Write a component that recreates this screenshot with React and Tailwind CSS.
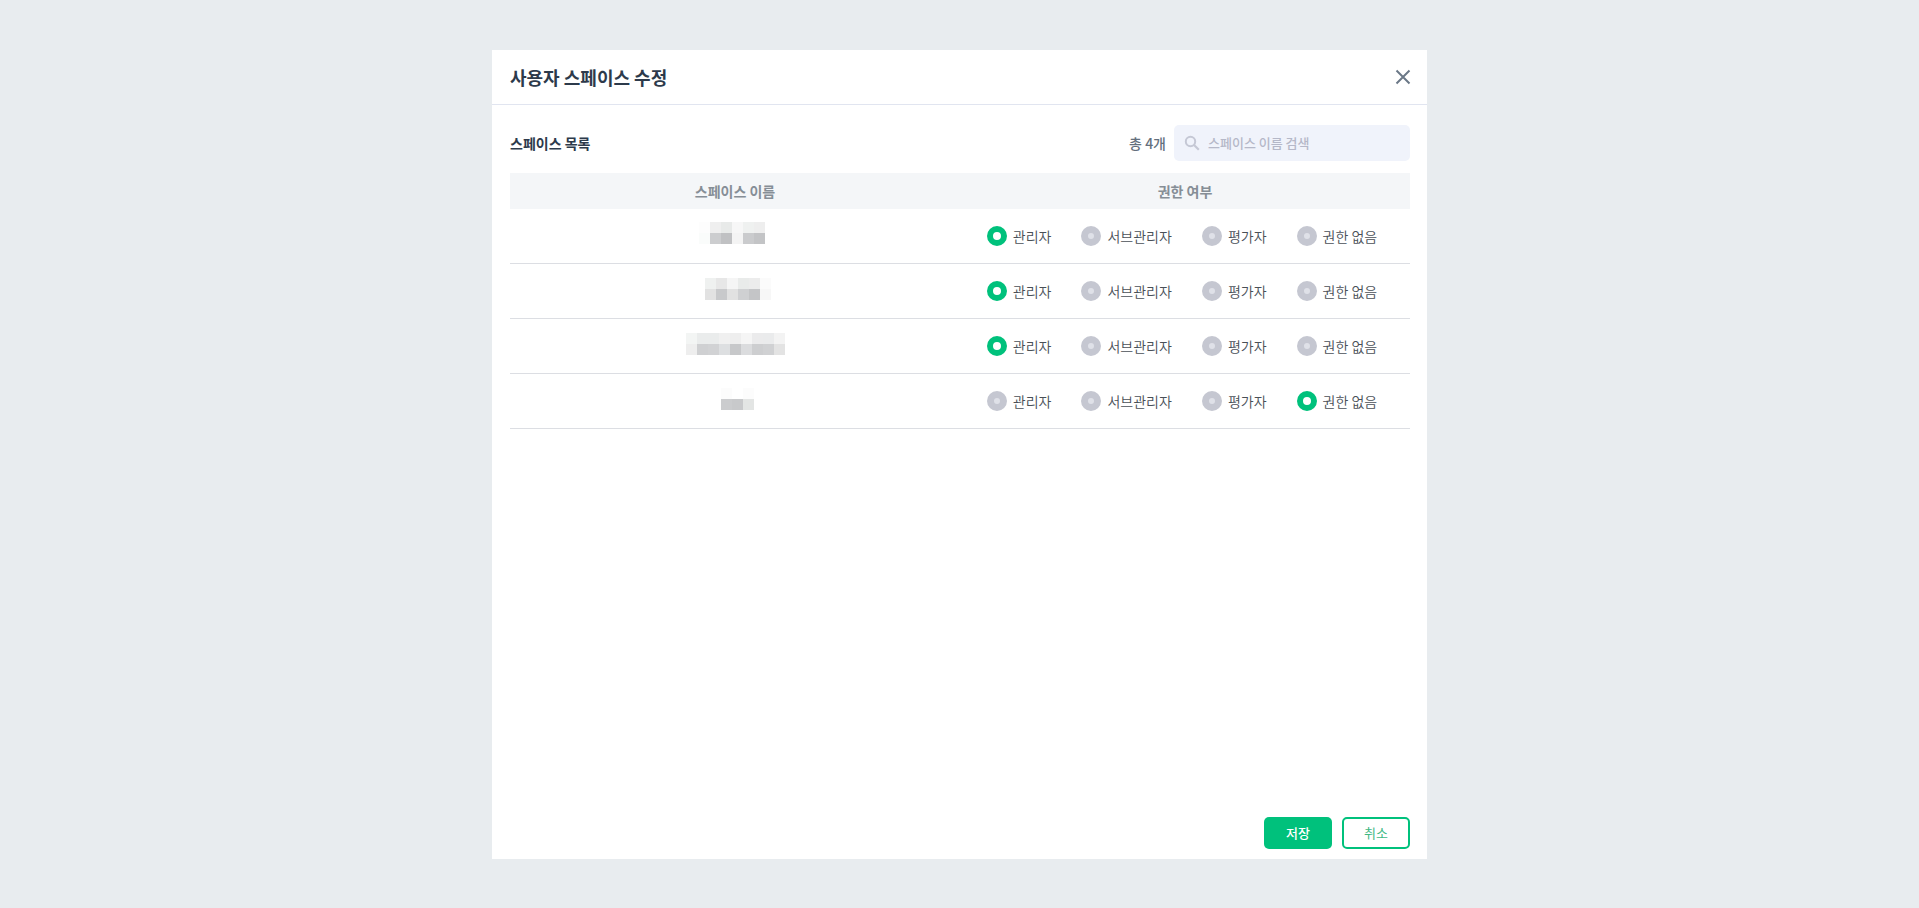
import React, { useState } from "react";

const roles = ["관리자", "서브관리자", "평가자", "권한 없음"];

// names are masked, x / y is where the mosaic starts inside its box
const spaces = [
  {
    id: 1,
    role: "관리자",
    x: 19,
    y: 1,
    mask: [
      ["#fdfdfd", "#efefef", "#e8eae9", "#f7f7f7", "#eff1f0", "#eeeeee"],
      ["#fafcfb", "#cccdcf", "#c0c1c3", "#f4f4f4", "#cacbcd", "#c3c4c6"],
    ],
  },
  {
    id: 2,
    role: "관리자",
    x: 25,
    y: 2,
    mask: [
      ["#eff1f0", "#e7e7e7", "#f5f5f5", "#e9ebea", "#ececec", "#fbfbfb"],
      ["#e2e2e2", "#c8c9cb", "#e1e1e1", "#cfd0d2", "#c4c5c7", "#f7f7f7"],
    ],
  },
  {
    id: 3,
    role: "관리자",
    x: 6,
    y: 2,
    mask: [
      ["#f3f5f4", "#eaecec", "#eaecec", "#f0f0f0", "#eeeeee", "#f5f5f5", "#ebebec", "#eaebec", "#f3f3f3"],
      ["#eeeeee", "#cfd0d2", "#d1d2d4", "#dddfe1", "#c7c8ca", "#dbdcde", "#cdced0", "#d0d1d3", "#e3e3e3"],
    ],
  },
  {
    id: 4,
    role: "권한 없음",
    x: 41,
    y: 2,
    mask: [
      ["#fcfcfc", "#ffffff", "#fcfcfc"],
      ["#cbccce", "#c8c9cb", "#e3e5e4"],
    ],
  },
];

function MaskedName({ space }) {
  return (
    <svg
      className="block mx-auto"
      width="110"
      height="30"
      viewBox="0 0 110 30"
      shapeRendering="crispEdges"
      aria-hidden="true"
    >
      {space.mask.map((row, r) =>
        row.map((color, c) => (
          <rect
            key={`${r}-${c}`}
            x={space.x + c * 11}
            y={space.y + r * 11}
            width="11"
            height="11"
            fill={color}
          />
        ))
      )}
    </svg>
  );
}

function RoleRadio({ name, label, checked, onChange }) {
  return (
    <label className="flex items-center gap-1.5 cursor-pointer">
      <input
        type="radio"
        name={name}
        checked={checked}
        onChange={onChange}
        className="appearance-none shrink-0 w-5 h-5 rounded-full border-[7px] border-[#c5c7d1] bg-[#dfe1e8] checked:border-[6px] checked:border-[#00c17c] checked:bg-white"
      />
      <span className="whitespace-nowrap">{label}</span>
    </label>
  );
}

export default function App() {
  const [selected, setSelected] = useState(
    Object.fromEntries(spaces.map((s) => [s.id, s.role]))
  );
  const [keyword, setKeyword] = useState("");

  return (
    <div className="min-h-screen flex justify-center pt-[50px] pb-[49px] bg-[#e8ecef] font-['Noto_Sans_CJK_KR',sans-serif] text-sm/[18px] font-[350] text-[#495057]">
      <div className="w-full max-w-[935px] flex flex-col bg-white">
        <header className="flex items-center justify-between h-[55px] pl-[18px] pr-4 border-b border-[#e1e5f0]">
          <h1 className="text-lg/[26px] font-bold text-[#2d3a4b]">
            사용자 스페이스 수정
          </h1>
          <button type="button" aria-label="닫기" className="cursor-pointer">
            <svg width="16" height="16" viewBox="0 0 16 16" className="block">
              <path
                d="M1.5 1.5l13 13M14.5 1.5l-13 13"
                stroke="#6b7887"
                strokeWidth="2"
                fill="none"
              />
            </svg>
          </button>
        </header>

        <main className="flex-1 pt-5 pl-[18px] pr-[17px]">
          <div className="flex items-center justify-between mb-3">
            <h2 className="font-bold text-[#2d3a4b]">스페이스 목록</h2>
            <div className="flex items-center gap-2">
              <span className="font-medium text-[#64707d]">총 4개</span>
              <label className="flex items-center gap-2 w-[236px] h-9 px-2.5 rounded-[5px] bg-[#f0f3fb]">
                <svg width="16" height="16" viewBox="0 0 16 16" className="shrink-0">
                  <circle cx="6.5" cy="6.5" r="4.7" stroke="#c5c8d5" strokeWidth="2" fill="none" />
                  <path d="M10 10l4.8 4.8" stroke="#c5c8d5" strokeWidth="2.2" fill="none" />
                </svg>
                <input
                  type="text"
                  aria-label="스페이스 이름 검색"
                  placeholder="스페이스 이름 검색"
                  value={keyword}
                  onChange={(e) => setKeyword(e.target.value)}
                  className="flex-1 min-w-0 bg-transparent text-[13px] font-medium outline-none placeholder:text-[#b5b8c8]"
                />
              </label>
            </div>
          </div>

          <table className="w-full table-fixed border-separate border-spacing-0">
            <thead>
              <tr className="h-9 bg-[#f4f6f8] text-[#868e96]">
                <th className="p-0 font-bold">스페이스 이름</th>
                <th className="p-0 font-bold">권한 여부</th>
              </tr>
            </thead>
            <tbody>
              {spaces.map((space) => (
                <tr key={space.id} className="h-[55px]">
                  <td className="p-0 border-b border-[#dcdee3]">
                    <MaskedName space={space} />
                  </td>
                  <td className="p-0 pr-1.5 border-b border-[#dcdee3]">
                    <div className="flex justify-center gap-[30px]">
                      {roles.map((role) => (
                        <RoleRadio
                          key={role}
                          name={`space-${space.id}`}
                          label={role}
                          checked={selected[space.id] === role}
                          onChange={() =>
                            setSelected({ ...selected, [space.id]: role })
                          }
                        />
                      ))}
                    </div>
                  </td>
                </tr>
              ))}
            </tbody>
          </table>
        </main>

        <footer className="flex justify-end gap-2.5 pr-[17px] pb-2.5 text-[13px]">
          <button
            type="button"
            className="w-[68px] h-8 rounded-[5px] bg-[#00c17c] font-medium text-white cursor-pointer"
          >
            저장
          </button>
          <button
            type="button"
            className="w-[68px] h-8 rounded-[5px] border-2 border-[#00c17c] font-normal text-[#3fb984] cursor-pointer"
          >
            취소
          </button>
        </footer>
      </div>
    </div>
  );
}
